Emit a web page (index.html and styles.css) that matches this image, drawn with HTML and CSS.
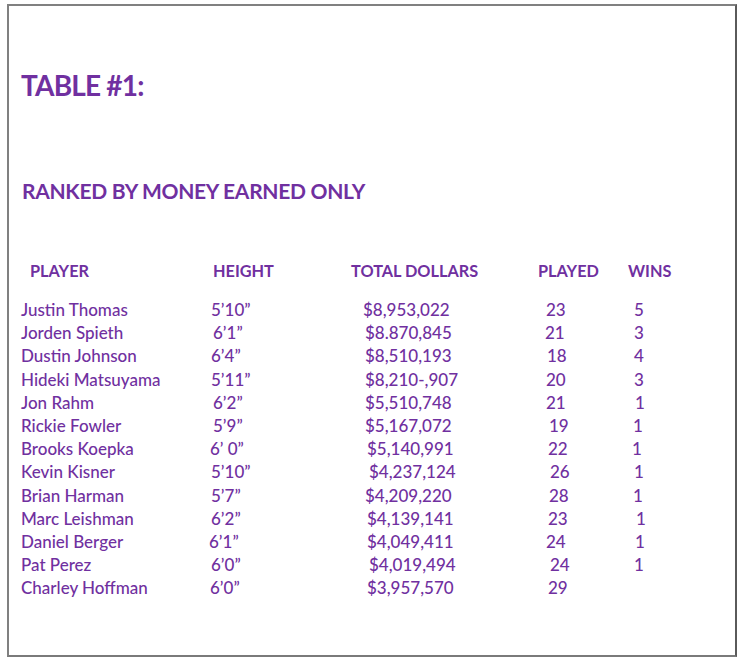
FILE: index.html
```html
<!DOCTYPE html>
<html>
<head>
<meta charset="utf-8">
<link rel="stylesheet" href="styles.css">
</head>
<body>
<div class="frame">
  <h1 class="title">TABLE #1:</h1>
  <h2 class="subtitle">RANKED BY MONEY EARNED ONLY</h2>
  <div class="table">
    <div class="hd h-player">PLAYER</div>
    <div class="hd h-height">HEIGHT</div>
    <div class="hd h-total">TOTAL DOLLARS</div>
    <div class="hd h-played">PLAYED</div>
    <div class="hd h-wins">WINS</div>

    <div class="c first">Justin Thomas</div><div class="c first">5’10”</div><div class="c first">$8,953,022</div><div class="c first m1">23</div><div class="c first m2">5</div>
    <div class="c">Jorden Spieth</div><div class="c m2">6’1”</div><div class="c m2">$8.870,845</div><div class="c">21</div><div class="c m2">3</div>
    <div class="c">Dustin Johnson</div><div class="c">6’4”</div><div class="c m2">$8,510,193</div><div class="c m2">18</div><div class="c m2">4</div>
    <div class="c">Hideki Matsuyama</div><div class="c">5’11”</div><div class="c m2">$8,210-,907</div><div class="c m1">20</div><div class="c m2">3</div>
    <div class="c">Jon Rahm</div><div class="c m2">6’2”</div><div class="c m2">$5,510,748</div><div class="c m1">21</div><div class="c m3">1</div>
    <div class="c">Rickie Fowler</div><div class="c m2">5’9”</div><div class="c m2">$5,167,072</div><div class="c m4">19</div><div class="c m1">1</div>
    <div class="c">Brooks Koepka</div><div class="c mn1">6’ 0”</div><div class="c m4">$5,140,991</div><div class="c m3">22</div><div class="c">1</div>
    <div class="c">Kevin Kisner</div><div class="c">5’10”</div><div class="c m6">$4,237,124</div><div class="c m5">26</div><div class="c m2">1</div>
    <div class="c">Brian Harman</div><div class="c">5’7”</div><div class="c m2">$4,209,220</div><div class="c m4">28</div><div class="c m1">1</div>
    <div class="c">Marc Leishman</div><div class="c">6’2”</div><div class="c m4">$4,139,141</div><div class="c m3">23</div><div class="c m4">1</div>
    <div class="c">Daniel Berger</div><div class="c mn2">6’1”</div><div class="c m4">$4,049,411</div><div class="c m1">24</div><div class="c m3">1</div>
    <div class="c">Pat Perez</div><div class="c">6’0”</div><div class="c m6">$4,019,494</div><div class="c m5">24</div><div class="c m2">1</div>
    <div class="c">Charley Hoffman</div><div class="c mn1">6’0”</div><div class="c m4">$3,957,570</div><div class="c m3">29</div><div class="c"></div>
  </div>
</div>
</body>
</html>
```

FILE: styles.css
```css
html, body {
  margin: 0;
  padding: 0;
  background: #ffffff;
}

body {
  font-family: Lato, "Open Sans", sans-serif;
  color: #7030a0;
}

.frame {
  box-sizing: border-box;
  margin: 4px 0 0 7px;
  width: 730px;
  height: 653px;
  border: 2px solid #808080;
  border-right-color: #5a5a5a;
  border-bottom-color: #7a7a7a;
  padding: 65px 0 0 12px;
}

.title {
  margin: 0;
  font-size: 28px;
  line-height: 29px;
  font-weight: 700;
  letter-spacing: -0.8px;
}

.subtitle {
  margin: 80px 0 0 1px;
  font-size: 21px;
  line-height: 22px;
  font-weight: 700;
  letter-spacing: -0.3px;
}

.table {
  margin-top: 59px;
  display: grid;
  grid-template-columns: 190px 152px 182px 87px 100px;
}

.hd {
  font-size: 16.3px;
  line-height: 20px;
  font-weight: 700;
}

.h-player { margin-left: 9px; }
.h-height { margin-left: 2px; }
.h-total { margin-left: -12px; }
.h-played { margin-left: -7px; }
.h-wins { margin-left: -4px; }

.c {
  font-size: 17px;
  line-height: 23.2px;
  font-weight: 500;
  white-space: pre;
}

.c.first { margin-top: 17px; }

.mn2 { margin-left: -2px; }
.mn1 { margin-left: -1px; }
.m1 { margin-left: 1px; }
.m2 { margin-left: 2px; }
.m3 { margin-left: 3px; }
.m4 { margin-left: 4px; }
.m5 { margin-left: 5px; }
.m6 { margin-left: 6px; }
```
